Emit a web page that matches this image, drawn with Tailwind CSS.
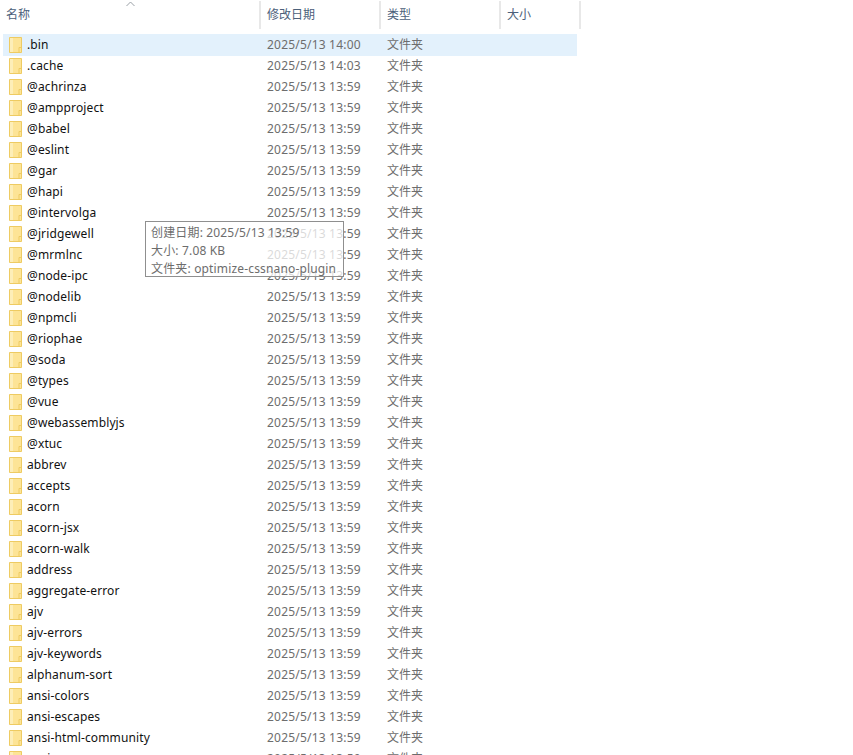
<!DOCTYPE html>
<html lang="zh-CN">
<head>
    <meta charset="UTF-8">
    <meta name="viewport" content="width=device-width, initial-scale=1.0">
    <title>node_modules</title>
    <script src="https://cdn.jsdelivr.net/npm/@tailwindcss/browser@4"></script>
</head>
<body class="bg-white overflow-hidden h-[755px] relative font-['Noto_Sans','Noto_Sans_CJK_SC',sans-serif] text-[12px]">

    <!-- Header -->
    <div class="relative flex h-[28px] mt-[1px] text-[#4c607a] leading-[28px]">
        <div class="w-[261px] pl-[6px] border-r-2 border-[#e8e8e8]">名称</div>
        <div class="w-[120px] pl-[6px] border-r-2 border-[#e8e8e8]">修改日期</div>
        <div class="w-[120px] pl-[6px] border-r-2 border-[#e8e8e8]">类型</div>
        <div class="w-[80px] pl-[6px] border-r-2 border-[#e8e8e8]">大小</div>
        <svg class="absolute left-[126px] top-0" width="9" height="6" viewBox="0 0 9 6" fill="none" stroke="#9aa0a6"><path d="M0.5 5 L4.5 1 L8.5 5"/></svg>
    </div>

    <!-- File rows -->
    <div id="rows" class="mt-[5px]"></div>

    <!-- Tooltip -->
    <div class="absolute left-[145px] top-[221px] w-[199px] h-[56px] border border-[#8f8f8f] bg-white/75 pl-[5px] pt-[2px] text-[#6d6d6d] leading-[18px] tracking-[0.16px]">
        <div>创建日期: 2025/5/13 13:59</div>
        <div>大小: 7.08 KB</div>
        <div>文件夹: optimize-cssnano-plugin</div>
    </div>

<script>
    const names = ['.bin','.cache','@achrinza','@ampproject','@babel','@eslint','@gar','@hapi','@intervolga','@jridgewell','@mrmlnc','@node-ipc','@nodelib','@npmcli','@riophae','@soda','@types','@vue','@webassemblyjs','@xtuc','abbrev','accepts','acorn','acorn-jsx','acorn-walk','address','aggregate-error','ajv','ajv-errors','ajv-keywords','alphanum-sort','ansi-colors','ansi-escapes','ansi-html-community','ansi-regex'];
    const times = {'.bin': '14:00', '.cache': '14:03'};
    const folder = `<svg width="13" height="16" viewBox="0 0 13 16" class="shrink-0"><path d="M0.5 0.5 H12.5 V15.5 H0.5 Z" fill="#fde496" stroke="#eecb62"/><path d="M1 1 H4 V15 H1 Z" fill="#fdeeb8"/><path d="M10 15.5 V10.5 H12.5" fill="none" stroke="#eecb62"/></svg>`;

    document.getElementById('rows').innerHTML = names.map((name, i) => `
        <div class="flex items-center ml-[3px] w-[574px] ${i === 0 ? 'h-[22px] pb-[1px] mb-[-1px] bg-[#e3f1fc]' : 'h-[21px]'}">
            <div class="w-[258px] flex items-center gap-[5px] pl-[6px] text-[#111111] tracking-[0.12px]">${folder}<span>${name}</span></div>
            <div class="w-[120px] pl-[6px] text-[#6d6d6d] tracking-[0.2px]">2025/5/13 ${times[name] || '13:59'}</div>
            <div class="pl-[6px] text-[#6d6d6d]">文件夹</div>
        </div>`).join('');
</script>
</body>
</html>
